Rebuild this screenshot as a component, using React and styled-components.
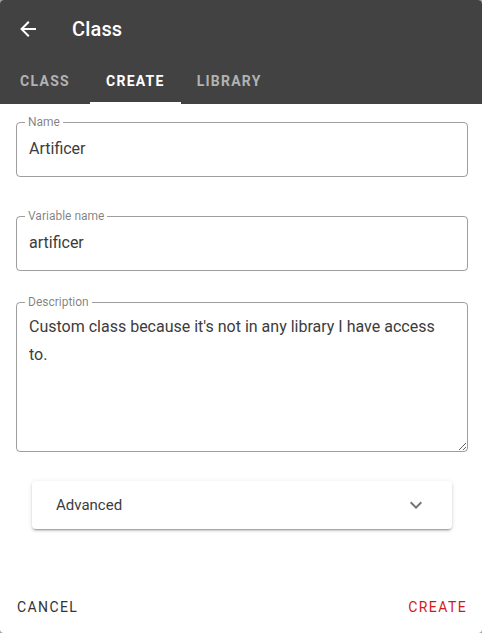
import React, { useState } from 'react';
import styled, { createGlobalStyle } from 'styled-components';

const GlobalStyle = createGlobalStyle`
    html, body {
        margin: 0;
        padding: 0;
        background: #9e9e9e;
    }
    body {
        font-family: Roboto, "Noto Sans", "Liberation Sans", sans-serif;
        -webkit-font-smoothing: antialiased;
    }
    * {
        box-sizing: border-box;
    }
`;

const Dialog = styled.div`
    width: 482px;
    height: 633px;
    background: #fff;
    border-radius: 4px;
    overflow: hidden;
    display: flex;
    flex-direction: column;
`;

const Header = styled.header`
    background: #424242;
    color: #fff;
`;

const Toolbar = styled.div`
    height: 56px;
    display: flex;
    align-items: center;
    padding: 1px 16px 0;
`;

const IconButton = styled.button`
    width: 48px;
    height: 48px;
    margin-left: -12px;
    border: 0;
    padding: 0;
    background: transparent;
    display: flex;
    align-items: center;
    justify-content: center;
    cursor: pointer;
    svg {
        width: 24px;
        height: 24px;
        fill: #fff;
    }
`;

const Title = styled.div`
    padding-left: 20px;
    font-size: 20px;
    font-weight: 500;
    letter-spacing: 0.15px;
    line-height: 1.5;
`;

const Tabs = styled.nav`
    height: 48px;
    display: flex;
`;

const Tab = styled.button`
    min-width: 90px;
    height: 48px;
    padding: 4px 16px 0;
    border: 0;
    background: transparent;
    font-family: inherit;
    font-size: 14px;
    font-weight: 700;
    letter-spacing: 1.25px;
    text-transform: uppercase;
    color: ${p => (p.$active ? '#fff' : 'rgba(255, 255, 255, 0.6)')};
    border-bottom: 2px solid ${p => (p.$active ? '#fff' : 'transparent')};
    cursor: pointer;
`;

const Content = styled.main`
    flex: 1;
    padding: 12px 14px 0 16px;
    display: flex;
    flex-direction: column;
`;

const Field = styled.fieldset`
    margin: ${p => p.$gap || 0}px 0 0;
    padding: 9px 12px 15px;
    border: 1px solid rgba(0, 0, 0, 0.38);
    border-radius: 4px;
    min-width: 0;
`;

const AreaField = styled(Field)`
    padding: 5px 0 0 12px;
`;

const Legend = styled.legend`
    font-size: 12px;
    line-height: 12px;
    padding: 0 3px;
    margin-left: -4px;
    color: rgba(0, 0, 0, 0.5);
`;

const Input = styled.input`
    display: block;
    width: 100%;
    height: 24px;
    border: 0;
    outline: 0;
    padding: 0;
    font-family: inherit;
    font-size: 16px;
    line-height: 24px;
    color: #3c3c3c;
    background: transparent;
`;

const TextArea = styled.textarea`
    display: block;
    width: 100%;
    height: 138px;
    border: 0;
    outline: 0;
    padding: 0 12px 0 0;
    margin: 0;
    resize: vertical;
    font-family: inherit;
    font-size: 16px;
    line-height: 28px;
    color: #3c3c3c;
    background: transparent;
`;

const Panel = styled.div`
    margin: 29px 16px 0;
    border-radius: 4px;
    background: #fff;
    box-shadow: 0 3px 1px -2px rgba(0, 0, 0, 0.2), 0 2px 2px 0 rgba(0, 0, 0, 0.14),
        0 1px 5px 0 rgba(0, 0, 0, 0.12);
`;

const PanelHeader = styled.button`
    width: 100%;
    height: 48px;
    padding: 0 24px;
    border: 0;
    background: transparent;
    display: flex;
    align-items: center;
    justify-content: space-between;
    font-family: inherit;
    font-size: 15px;
    color: #3c3c3c;
    cursor: pointer;
    svg {
        width: 24px;
        height: 24px;
        fill: rgba(0, 0, 0, 0.54);
        transform: ${p => (p.$open ? 'rotate(180deg)' : 'none')};
    }
`;

const Actions = styled.footer`
    display: flex;
    justify-content: space-between;
    padding: 8px 7px 8px 9px;
`;

const TextButton = styled.button`
    height: 36px;
    min-width: 64px;
    padding: 0 8px;
    border: 0;
    background: transparent;
    font-family: inherit;
    font-size: 14px;
    font-weight: 400;
    letter-spacing: 1.4px;
    text-transform: uppercase;
    color: ${p => p.$color || '#333'};
    cursor: pointer;
`;

const ArrowLeft = () => (
    <svg viewBox="0 0 24 24">
        <path d="M20,11V13H8L13.5,18.5L12.08,19.92L4.16,12L12.08,4.08L13.5,5.5L8,11H20Z" />
    </svg>
);

const ChevronDown = () => (
    <svg viewBox="0 0 24 24">
        <path d="M7.41,8.58L12,13.17L16.59,8.58L18,10L12,16L6,10L7.41,8.58Z" />
    </svg>
);

const tabs = ['Class', 'Create', 'Library'];

const App = () => {
    const [tab, setTab] = useState(1);
    const [name, setName] = useState('Artificer');
    const [variable, setVariable] = useState('artificer');
    const [description, setDescription] = useState(
        "Custom class because it's not in any library I have access to."
    );
    const [open, setOpen] = useState(false);

    return (
        <>
            <GlobalStyle />
            <Dialog>
                <Header>
                    <Toolbar>
                        <IconButton aria-label="Back">
                            <ArrowLeft />
                        </IconButton>
                        <Title>Class</Title>
                    </Toolbar>
                    <Tabs>
                        {tabs.map((t, i) => (
                            <Tab key={t} $active={i === tab} onClick={() => setTab(i)}>
                                {t}
                            </Tab>
                        ))}
                    </Tabs>
                </Header>
                <Content>
                    <Field>
                        <Legend>Name</Legend>
                        <Input value={name} onChange={e => setName(e.target.value)} />
                    </Field>
                    <Field $gap={33}>
                        <Legend>Variable name</Legend>
                        <Input value={variable} onChange={e => setVariable(e.target.value)} />
                    </Field>
                    <AreaField $gap={25}>
                        <Legend>Description</Legend>
                        <TextArea value={description} onChange={e => setDescription(e.target.value)} />
                    </AreaField>
                    <Panel>
                        <PanelHeader $open={open} onClick={() => setOpen(!open)}>
                            <span>Advanced</span>
                            <ChevronDown />
                        </PanelHeader>
                    </Panel>
                </Content>
                <Actions>
                    <TextButton>Cancel</TextButton>
                    <TextButton $color="#d11a1a">Create</TextButton>
                </Actions>
            </Dialog>
        </>
    );
};

export default App;
